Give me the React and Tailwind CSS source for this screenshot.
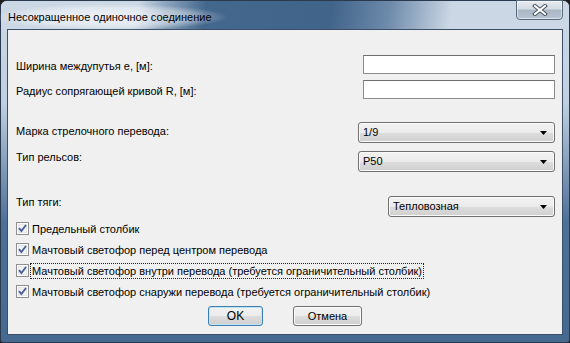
import React from 'react';

const font = "font-['Liberation_Sans',Arial,sans-serif]";

function CheckBox({ label, focused }) {
    return (
        <div className="h-[21px] flex items-center pl-[8px]">
            <svg width="13" height="13" viewBox="0 0 13 13" className="shrink-0">
                <rect x="0.5" y="0.5" width="12" height="12" fill="#fff" stroke="#8e8f8f" />
                <rect x="2" y="2" width="9" height="9" fill="#e4e6ea" />
                <rect x="3" y="3" width="7" height="7" fill="#f2f3f5" />
                <path d="M3 6.2 L5.4 9 L10 3" fill="none" stroke="#4a5f97" strokeWidth="1.9" />
            </svg>
            <span className={`ml-[2px] px-[1px] leading-[14px] text-[11px] text-black ${focused ? 'outline-1 outline-dotted outline-[#222]' : ''}`}>
                {label}
            </span>
        </div>
    );
}

function Combo({ value, className }) {
    return (
        <div className={`h-[21px] rounded-[3px] border border-[#707070] bg-[linear-gradient(180deg,#f2f2f2_0%,#ebebeb_50%,#dddddd_51%,#cfcfcf_100%)] shadow-[inset_0_0_0_1px_#fafafa] flex items-center pl-[4px] pr-[7px] ${className}`}>
            <span className="flex-1 text-[11px] text-black">{value}</span>
            <svg width="7" height="4" viewBox="0 0 7 4">
                <path d="M0 0 H7 L3.5 4 Z" fill="#000" />
            </svg>
        </div>
    );
}

function Input() {
    return <div className="w-[192px] h-[19px] bg-white border border-[#8b8b8b] border-t-[#6f6f6f]" />;
}

export default function App() {
    return (
        <div className={`w-[570px] h-[343px] bg-[#1d1d1d] ${font}`}>
            <div className="w-full h-full rounded-t-[7px] rounded-b-[3px] border border-[#2a3a4e] flex flex-col pb-[7px] bg-[linear-gradient(180deg,#ccd8e5_0%,#c0cfdf_30%,#7d98b6_50%,#4c7098_65%,#46698f_100%)]">
                {/* Title bar */}
                <div className="h-[28px] shrink-0 flex items-start relative px-[6px] rounded-t-[6px] bg-[linear-gradient(100deg,#cbd7e4_24%,#8aa3bd_29%,#44678d_36%,#41648a_58%,#6d8aaa_68%,#cbd7e4_79%)]">
                    <span className="mt-[3px] -ml-[13px] px-[14px] py-[6px] rounded-full text-[11px] leading-[14px] text-black bg-[radial-gradient(ellipse_at_center,#ffffffb0_0%,#ffffff66_50%,#ffffff00_72%)]">
                        Несокращенное одиночное соединение
                    </span>
                    {/* Close button */}
                    <div className="absolute right-[6px] -top-[1px] w-[47px] h-[20px] rounded-b-[4px] border border-[#5a6a7d] bg-[linear-gradient(180deg,#e6ebf1_0%,#d3dbe4_45%,#aab6c4_50%,#b9c5d2_100%)] shadow-[inset_0_0_0_1px_rgba(255,255,255,0.5)] flex items-center justify-center">
                        <svg width="16" height="12" viewBox="0 0 16 12">
                            <path d="M3 2 L13 10 M13 2 L3 10" stroke="#45505c" strokeWidth="4" strokeLinecap="square" />
                            <path d="M3 2 L13 10 M13 2 L3 10" stroke="#ffffff" strokeWidth="2" strokeLinecap="square" />
                        </svg>
                    </div>
                </div>

                {/* Client area */}
                <div className="flex-1 mx-[6px] border border-[#3b5068] bg-[#f0f0f0] text-[11px] text-black flex flex-col">
                    <div className="mt-[25px] flex items-start justify-between pl-[8px] pr-[7px]">
                        <span className="mt-[5px] leading-[13px]">Ширина междупутья е, [м]:</span>
                        <Input />
                    </div>
                    <div className="mt-[6px] flex items-start justify-between pl-[8px] pr-[7px]">
                        <span className="mt-[5px] leading-[13px]">Радиус сопрягающей кривой R, [м]:</span>
                        <Input />
                    </div>
                    <div className="mt-[23px] flex items-start justify-between pl-[8px] pr-[7px]">
                        <span className="mt-[3px] leading-[13px]">Марка стрелочного перевода:</span>
                        <Combo value="1/9" className="w-[197px]" />
                    </div>
                    <div className="mt-[8px] flex items-start justify-between pl-[8px] pr-[7px]">
                        <span className="mt-[0px] leading-[13px]">Тип рельсов:</span>
                        <Combo value="Р50" className="w-[197px]" />
                    </div>
                    <div className="mt-[24px] flex items-start justify-between pl-[8px] pr-[7px]">
                        <span className="mt-[0px] leading-[13px]">Тип тяги:</span>
                        <Combo value="Тепловозная" className="w-[167px]" />
                    </div>

                    <div className="mt-[1px] flex flex-col">
                        <CheckBox label="Предельный столбик" />
                        <CheckBox label="Мачтовый светофор перед центром перевода" />
                        <CheckBox label="Мачтовый светофор внутри перевода (требуется ограничительный столбик)" focused />
                        <CheckBox label="Мачтовый светофор снаружи перевода (требуется ограничительный столбик)" />
                    </div>

                    <div className="mt-[4px] flex justify-center gap-[30px]">
                        <button className="w-[55px] h-[20px] rounded-[3px] border border-[#3c7fb1] bg-[linear-gradient(180deg,#f2f2f2_0%,#ebebeb_50%,#dddddd_51%,#cfcfcf_100%)] shadow-[inset_0_0_0_1px_#bde6fa] text-[12px] leading-[12px] text-black">
                            OK
                        </button>
                        <button className="w-[69px] h-[20px] rounded-[3px] border border-[#707070] bg-[linear-gradient(180deg,#f2f2f2_0%,#ebebeb_50%,#dddddd_51%,#cfcfcf_100%)] shadow-[inset_0_0_0_1px_#fcfcfc] text-[11px] leading-[11px] text-black">
                            Отмена
                        </button>
                    </div>
                </div>
            </div>
        </div>
    );
}
